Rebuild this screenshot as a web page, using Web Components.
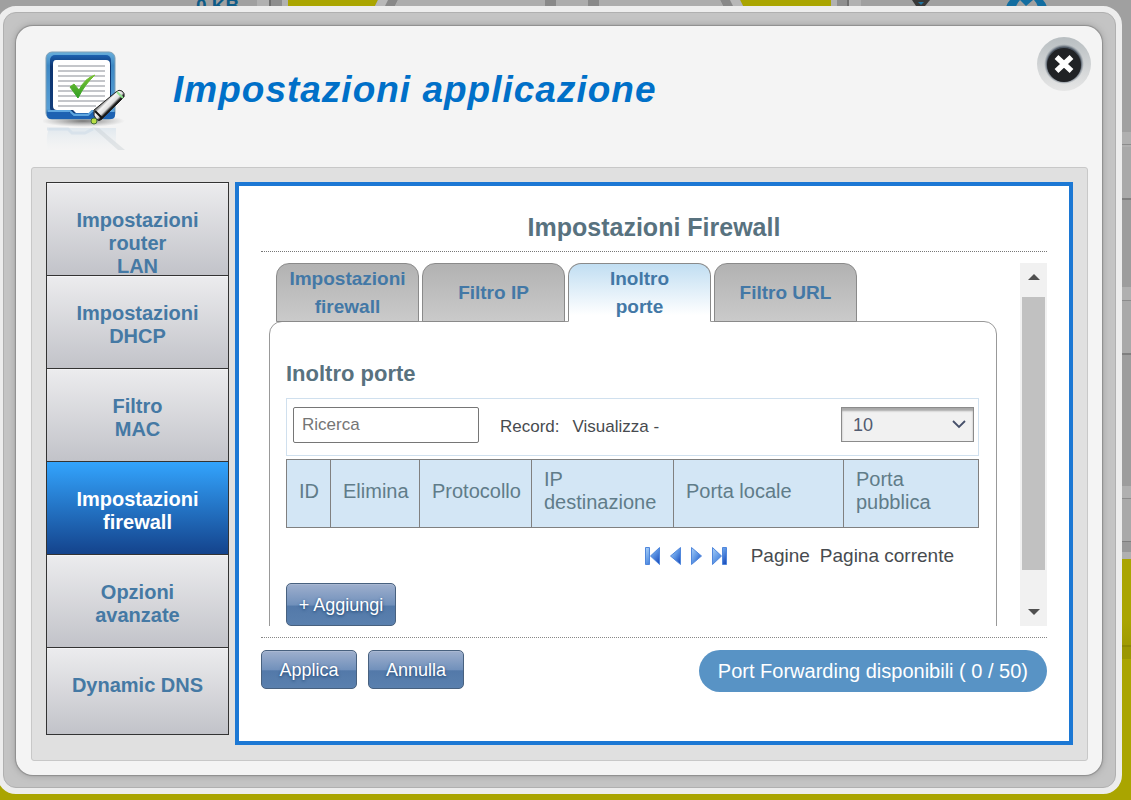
<!DOCTYPE html>
<html lang="it">
<head>
<meta charset="utf-8">
<title>Impostazioni applicazione</title>
<style>
  html, body { margin: 0; min-height: 100%; }
  body { background: #aaa500; font-family: Arial, "Liberation Sans", sans-serif; color: #474b4f; overflow-x: hidden; }
</style>
</head>
<body>
<page-backdrop></page-backdrop>
<settings-dialog heading="Impostazioni applicazione">
  <side-menu slot="menu">
    <menu-entry>Impostazioni
router
LAN</menu-entry>
    <menu-entry>Impostazioni
DHCP</menu-entry>
    <menu-entry>Filtro
MAC</menu-entry>
    <menu-entry active>Impostazioni
firewall</menu-entry>
    <menu-entry>Opzioni
avanzate</menu-entry>
    <menu-entry last>Dynamic DNS</menu-entry>
  </side-menu>
  <content-pane heading="Impostazioni Firewall">
    <scroll-area>
      <tab-strip>
        <tab-item>Impostazioni
firewall</tab-item>
        <tab-item>Filtro IP</tab-item>
        <tab-item active>Inoltro
porte</tab-item>
        <tab-item>Filtro URL</tab-item>
      </tab-strip>
      <forwarding-panel></forwarding-panel>
    </scroll-area>
    <gloss-button slot="footer">Applica</gloss-button>
    <gloss-button slot="footer">Annulla</gloss-button>
    <count-badge slot="status">Port Forwarding disponibili ( 0 / 50)</count-badge>
  </content-pane>
</settings-dialog>

<script>
const define = (name, html, setup) => {
  const template = document.createElement('template');
  template.innerHTML = html;
  customElements.define(name, class extends HTMLElement {
    connectedCallback() {
      if (this.shadowRoot) return;
      this.attachShadow({ mode: 'open' }).append(template.content.cloneNode(true));
      if (setup) setup(this, this.shadowRoot);
    }
  });
};

define('page-backdrop', `
  <style>
    :host { display: flex; justify-content: space-between; position: fixed; inset: 0; z-index: -1; overflow: hidden; }
    .top { flex: 1; min-width: 0; height: 40px; overflow: hidden; background: #a0a0a0; display: grid; }
    .top > * { grid-area: 1 / 1; }
    svg { display: block; width: 100%; height: 40px; }
    span { font: bold 19px/20px Arial, "Liberation Sans", sans-serif; color: #0d5b87; margin: -4px 0 0 196px; }
    .side { width: 40px; margin-left: -40px; background: linear-gradient(
      #a0a0a0 0 132px, #b0b0b0 132px 144px, #8c8c8c 144px 145px, #b0b0b0 145px 147px, #a9a9a9 147px 198px,
      #7f7f7f 198px 200px, #9d9d9d 200px 287px, #b0b0b0 287px 300px, #8c8c8c 300px 301px, #a9a9a9 301px 353px,
      #7f7f7f 353px 355px, #9d9d9d 355px 486px, #b0b0b0 486px 498px, #8c8c8c 498px 499px, #a9a9a9 499px 541px,
      #7f7f7f 541px 542px, #999 542px 552px, #b0b0b0 552px 559px, #aaa500 559px 620px, #a09b00 645px,
      #8d8900 645px 647px, #9b9700 647px 659px, #aaa500 659px); }
  </style>
  <div class="top">
    <svg viewBox="0 0 1131 40" preserveAspectRatio="none" aria-hidden="true">
      <path fill="#b1b1b1" d="M257 0h31v40h-31zM831 0h30v40h-30z"/>
      <path fill="#6f6f6f" d="M269 0h2v40h-2zM847 0h2v40h-2z"/>
      <path fill="#8e8e8e" d="M271 0h11v40h-11zM837 0h10v40h-10z"/>
      <path fill="#aaa500" d="M288 0h90l-20 40h-70zM740 0h91v40h-71z"/>
      <path fill="#b8b8b8" d="M378 0h362l20 40H358z"/>
      <path fill="#888" d="M388 0h10l-20 40h-10zM720 0h10l20 40h-10z"/>
      <path fill="#acacac" d="M398 0h322l20 40H378z"/>
      <path fill="#898989" d="M545 0h11v40h-11zM588 0h11v40h-11z"/>
      <path fill="#383838" d="M912 0h18l-5 6h-9z"/>
      <path fill="#2375a0" d="M918 2h6l-3 3z"/>
      <path fill="#126da0" d="M1010 0h10q-3 3-4 7h-10q1-4 4-7zM1034 0h9q3 3 4 7h-9q-1-4-4-7zM1020 0l6 6 7-6z"/>
    </svg>
    <span>0 KB</span>
  </div>
  <div class="side"></div>
`);

define('settings-dialog', `
  <style>
    :host { display: block; margin: 6px 9px 6px -3px; border: 6px solid #ededed; border-radius: 19px; background: #ededed; }
    .frame { padding: 13px 13px 12px 12px; background: #c4c4c4; border: 1px solid #b0b0b0; border-radius: 13px; }
    .sheet { background: #f4f4f4; border-radius: 17px; padding: 0 14px 14px 15px; box-shadow: 0 0 1px 1px #8e8e8e, 0 0 7px 1px #a0a0a0; }
    header { display: flex; align-items: flex-start; height: 141px; box-sizing: border-box; padding: 11px 0 0 12px; margin-right: -3px; }
    app-logo { margin-top: 13px; }
    h1 { flex: 1; margin: 32px 0 0 43px; font-size: 37px; line-height: 42px; font-style: italic; letter-spacing: 1px; color: #0070c8; }
    .body { display: grid; grid-template-columns: 183px minmax(0, 1fr); gap: 6px; align-items: start; padding: 14px 14px 15px;
      border: 1px solid #c8c8c8; border-radius: 3px; background: #e0e0e0; }
  </style>
  <div class="frame"><div class="sheet" role="dialog">
    <header><app-logo></app-logo><h1></h1><close-button></close-button></header>
    <div class="body"><slot name="menu"></slot><slot></slot></div>
  </div></div>
`, (el, root) => { root.querySelector('h1').textContent = el.getAttribute('heading'); });

define('app-logo', `
  <style>:host { display: block; width: 87px; height: 105px; } svg { display: block; }</style>
  <svg width="87" height="105" viewBox="0 0 87 105" aria-hidden="true">
    <defs>
      <linearGradient id="rim" x2="0" y2="1"><stop stop-color="#68aedb"/><stop offset=".2" stop-color="#3e88c4"/><stop offset=".85" stop-color="#579fd6"/><stop offset=".95" stop-color="#1457a6"/></linearGradient>
      <linearGradient id="well" x2="0" y2="1"><stop stop-color="#1d61b0"/><stop offset=".2" stop-color="#0d3470"/><stop offset="1" stop-color="#123e7c"/></linearGradient>
      <linearGradient id="tick" x2="0" y2="1"><stop stop-color="#7cc436"/><stop offset="1" stop-color="#2f9e23"/></linearGradient>
      <linearGradient id="pen" x1="0" y1="0" x2="1" y2="1"><stop offset=".3" stop-color="#222"/><stop offset=".42" stop-color="#f4f4f4"/><stop offset=".52" stop-color="#ddd"/><stop offset=".58" stop-color="#161616"/><stop offset="1" stop-color="#0a3b44"/></linearGradient>
      <linearGradient id="fade" x2="0" y2="1"><stop stop-color="#d3e0ea" stop-opacity=".6"/><stop offset="1" stop-color="#e6ecf0" stop-opacity="0"/></linearGradient>
      <radialGradient id="ground"><stop stop-color="#777"/><stop offset="1" stop-color="#999" stop-opacity="0"/></radialGradient>
    </defs>
    <ellipse cx="40" cy="71" rx="42" ry="6" fill="url(#ground)"/>
    <path d="M6 78h67v22H5q-3-11 1-22z" fill="url(#fade)"/>
    <path d="M4 79h21l4 4h13l8-4" fill="none" stroke="#cfdce7" stroke-width="3" opacity=".6"/>
    <path d="M49 77l26 23h7L56 78z" fill="#c5ccd2" opacity=".4"/>
    <rect x="3" y="2" width="69" height="67" rx="6" fill="url(#rim)" stroke="#7f9fb5"/>
    <rect x="7" y="5" width="61" height="58" rx="5" fill="url(#well)"/>
    <path d="M13 10h50q4 0 4 4v42q0 4-4 4H51l-3 3H33l-3-3H14q-4 0-4-4V14q0-4 3-4z" fill="#fff"/>
    <path d="M4 62h22l4 4h15l4-4h23v3q0 4-4 4H8q-4 0-4-4z" fill="#1d62b2"/>
    <path d="M5 61h22l4 4h14l4-4h22" fill="none" stroke="#5ea6df" stroke-width="2"/>
    <path d="M15 16h47M15 21h47M15 26h47M15 31h47M15 36h47M15 41h47M15 46h47M15 51h47M15 56h38" stroke="#c4c6ca" stroke-width="2"/>
    <path d="M27 37l4-3 5 6q6-12 16-15-10 9-17 23z" fill="url(#tick)" stroke="url(#tick)"/>
    <path d="M51 60L73 42q3-3 6-1t2 6L59 69q-3 3-6 0t-2-9z" fill="url(#pen)" stroke="#222"/>
    <path d="M74 42l6 6" stroke="#8fe08c" stroke-width="2"/>
    <path d="M52 61l7 7" stroke="#111" stroke-width="2"/>
    <circle cx="51" cy="71" r="3" fill="#b9df45" stroke="#406c38"/>
  </svg>
`);

define('close-button', `
  <style>
    :host { display: block; }
    button { display: block; width: 54px; height: 54px; padding: 0; border: 0; background: none; cursor: pointer; }
    svg { display: block; }
  </style>
  <button aria-label="Chiudi"><svg width="54" height="54" viewBox="0 0 54 54">
    <defs>
      <linearGradient id="ring" x2="0" y2="1"><stop stop-color="#b8bec1"/><stop offset="1" stop-color="#e6e6e6"/></linearGradient>
      <radialGradient id="halo"><stop offset=".85" stop-color="#4f5965"/><stop offset="1" stop-color="#8d98a2" stop-opacity="0"/></radialGradient>
    </defs>
    <circle cx="27" cy="27" r="27" fill="url(#ring)"/>
    <circle cx="27" cy="27" r="20" fill="url(#halo)"/>
    <circle cx="27" cy="28" r="17" fill="#202225"/>
    <path d="M19.500 20l15 14M34.500 20l-15 14" stroke="#fff" stroke-width="5.500"/>
  </svg></button>
`);

define('side-menu', `
  <style>:host { display: block; } nav { border: 1px solid #333; }</style>
  <nav><slot></slot></nav>
`);

define('menu-entry', `
  <style>
    :host { display: block; }
    a { display: block; height: 93px; box-sizing: border-box; padding-top: 26px; border-bottom: 1px solid #333; overflow: hidden;
      background: linear-gradient(#ececee, #c2c3c9); color: #4579a4; box-shadow: inset 0 1px #f4f4f6;
      font-size: 20px; line-height: 23px; font-weight: bold; text-align: center; text-decoration: none; white-space: pre-line; }
    :host([active]) a { background: linear-gradient(#33a4fd, #14438c); color: #fff; box-shadow: none; }
    :host([last]) a { height: 86px; border: 0; }
  </style>
  <a href="#"><slot></slot></a>
`);

define('content-pane', `
  <style>
    :host { display: block; background: #fff; border: 4px solid #1c78d4; padding: 26px 22px 49px; }
    h2 { margin: 0 0 11px; padding-bottom: 9px; border-bottom: 1px dotted #777; font-size: 25px; line-height: 30px; text-align: center; color: #58727f; }
    footer { display: flex; align-items: flex-start; gap: 11px; margin-top: 11px; padding-top: 12px; border-top: 1px dotted #888; }
    .grow { flex: 1; }
  </style>
  <h2></h2>
  <slot></slot>
  <footer><slot name="footer"></slot><span class="grow"></span><slot name="status"></slot></footer>
`, (el, root) => { root.querySelector('h2').textContent = el.getAttribute('heading'); });

define('scroll-area', `
  <style>
    :host { display: flex; height: 363px; }
    .view { flex: 1; min-width: 0; overflow: hidden; padding: 0 23px 0 8px; }
    .bar { width: 27px; display: flex; flex-direction: column; background: #f1f1f1; }
    button { box-sizing: border-box; height: 34px; padding: 0; border: 0; background: none; display: grid; place-items: center; }
    svg { display: block; }
    .up { padding-bottom: 6px; }
    .down { padding-top: 6px; }
    .thumb { height: 273px; margin: 0 2px 22px; background: #c1c1c1; }
  </style>
  <div class="view"><slot></slot></div>
  <div class="bar">
    <button class="up" aria-label="Scorri su"><svg width="12" height="6"><path d="M0 6l6-6 6 6z" fill="#505050"/></svg></button>
    <div class="thumb"></div>
    <button class="down" aria-label="Scorri giù"><svg width="12" height="6"><path d="M0 0l6 6 6-6z" fill="#505050"/></svg></button>
  </div>
`);

define('tab-strip', `
  <style>:host { display: flex; gap: 3px; padding-left: 7px; }</style>
  <slot></slot>
`);

define('tab-item', `
  <style>
    :host { display: block; flex: 0 1 143px; z-index: 1; }
    button { display: flex; align-items: center; justify-content: center; width: 100%; height: 59px; padding: 0; margin-bottom: -1px;
      border: 1px solid #8a8a8a; border-radius: 13px 13px 0 0; background: linear-gradient(#b2b2b2, #cacaca);
      font: bold 19px/28px Arial, "Liberation Sans", sans-serif; color: #4378a6; white-space: pre-line; }
    :host([active]) button { background: linear-gradient(#c1def2, #fff 90%); border-bottom-color: #fff; }
  </style>
  <button><span><slot></slot></span></button>
`);

define('gloss-button', `
  <style>
    :host { display: block; }
    button { display: block; min-width: 96px; height: 39px; padding: 0 11px; border: 1px solid #48617f; border-radius: 5px; white-space: nowrap;
      background: linear-gradient(#9eafcd, #7090bb 52%, #5379a9 53%, #5a80ae); box-shadow: inset 0 1px #a9b8d2;
      font: 18px/24px Arial, "Liberation Sans", sans-serif; color: #fff; text-shadow: 0 1px 3px #1d4470; }
    :host([tall]) button { height: 43px; min-width: 110px; }
  </style>
  <button><slot></slot></button>
`);

define('count-badge', `
  <style>:host { display: block; padding: 0 19px; border-radius: 21px; background: #5893c5; color: #fff; font-size: 20px; line-height: 42px; white-space: nowrap; }</style>
  <slot></slot>
`);

define('page-arrows', `
  <style>
    :host { display: flex; align-items: center; gap: 10px; }
    button { display: block; padding: 0; border: 0; background: none; }
    svg { display: block; }
    path { fill: url(#blue); stroke: #5087dc; }
  </style>
  <button aria-label="Prima pagina"><svg width="15" height="18" viewBox="0 0 15 18">
    <defs><linearGradient id="blue" x2="1" y2="1"><stop stop-color="#a9d0f8"/><stop offset=".5" stop-color="#5c95e4"/><stop offset="1" stop-color="#1445b8"/></linearGradient></defs>
    <path d="M.5.5h4v17h-4zM14.500.5v17L5.500 9z"/></svg></button>
  <button aria-label="Pagina precedente"><svg width="11" height="18" viewBox="0 0 11 18"><path d="M10.500.5v17L.5 9z"/></svg></button>
  <button aria-label="Pagina successiva"><svg width="11" height="18" viewBox="0 0 11 18"><path d="M.5.5v17L10.500 9z"/></svg></button>
  <button aria-label="Ultima pagina"><svg width="15" height="18" viewBox="0 0 15 18"><path d="M10.500.5h4v17h-4zM.5.5v17L9.500 9z"/></svg></button>
`, (el, root) => {
  const defs = root.querySelector('defs');
  root.querySelectorAll('svg').forEach((svg, i) => { if (i) svg.prepend(defs.cloneNode(true)); });
});

define('forwarding-panel', `
  <style>
    :host { display: block; border: 1px solid #999; border-radius: 13px 13px 0 0; padding: 38px 17px 40px 16px; background: #fff; }
    h3 { margin: 0 0 11px; font-size: 22px; line-height: 27px; color: #58727f; }
    .tools { display: flex; align-items: center; padding: 8px 4px 12px 6px; border: 1px solid #d0e0ee; font-size: 17px; }
    input { width: 186px; height: 36px; box-sizing: border-box; padding: 0 8px; border: 1px solid #767676; border-radius: 2px; font: 17px Arial, "Liberation Sans", sans-serif; }
    input::placeholder { color: #757575; }
    .record { margin: 3px 13px 0 21px; }
    .view { margin-top: 3px; flex: 1; }
    .pick { position: relative; display: block; align-self: flex-start; }
    select { display: block; appearance: none; width: 133px; height: 35px; padding: 0 11px; border: 1px solid #8b8b8b; border-radius: 0; background: #f1f1f1;
      box-shadow: inset 0 3px 2px #a8a8a8; font: 18px Arial, "Liberation Sans", sans-serif; color: #525b70; }
    .pick svg { position: absolute; right: 8px; top: 13px; pointer-events: none; }
    table { width: 100%; margin-top: 3px; border-collapse: collapse; table-layout: fixed; }
    th { padding: 8px 11px 13px 12px; border: 1px solid #808080; background: #d3e6f5; color: #607c89; font-size: 20px; line-height: 23px; font-weight: normal; text-align: left; }
    .pager { display: flex; align-items: center; justify-content: flex-end; height: 55px; padding-right: 25px; font-size: 19px; }
    .pages { margin: 0 10px 0 24px; }
  </style>
  <h3>Inoltro porte</h3>
  <div class="tools">
    <input type="text" placeholder="Ricerca" aria-label="Ricerca">
    <label class="record" for="size">Record:</label><span class="view">Visualizza -</span>
    <span class="pick"><select id="size"><option>10</option><option>20</option><option>50</option></select>
      <svg width="14" height="9" viewBox="0 0 14 9" aria-hidden="true"><path d="M1 1l6 6 6-6" fill="none" stroke="#46506a" stroke-width="1.800"/></svg></span>
  </div>
  <table>
    <colgroup><col style="width:44px"><col style="width:89px"><col style="width:112px"><col style="width:142px"><col style="width:170px"><col></colgroup>
    <thead><tr><th>ID</th><th>Elimina</th><th>Protocollo</th><th>IP destinazione</th><th>Porta locale</th><th>Porta pubblica</th></tr></thead>
  </table>
  <div class="pager"><page-arrows></page-arrows><span class="pages">Pagine</span><span>Pagina corrente</span></div>
  <gloss-button tall>+ Aggiungi</gloss-button>
`);
</script>
</body>
</html>
